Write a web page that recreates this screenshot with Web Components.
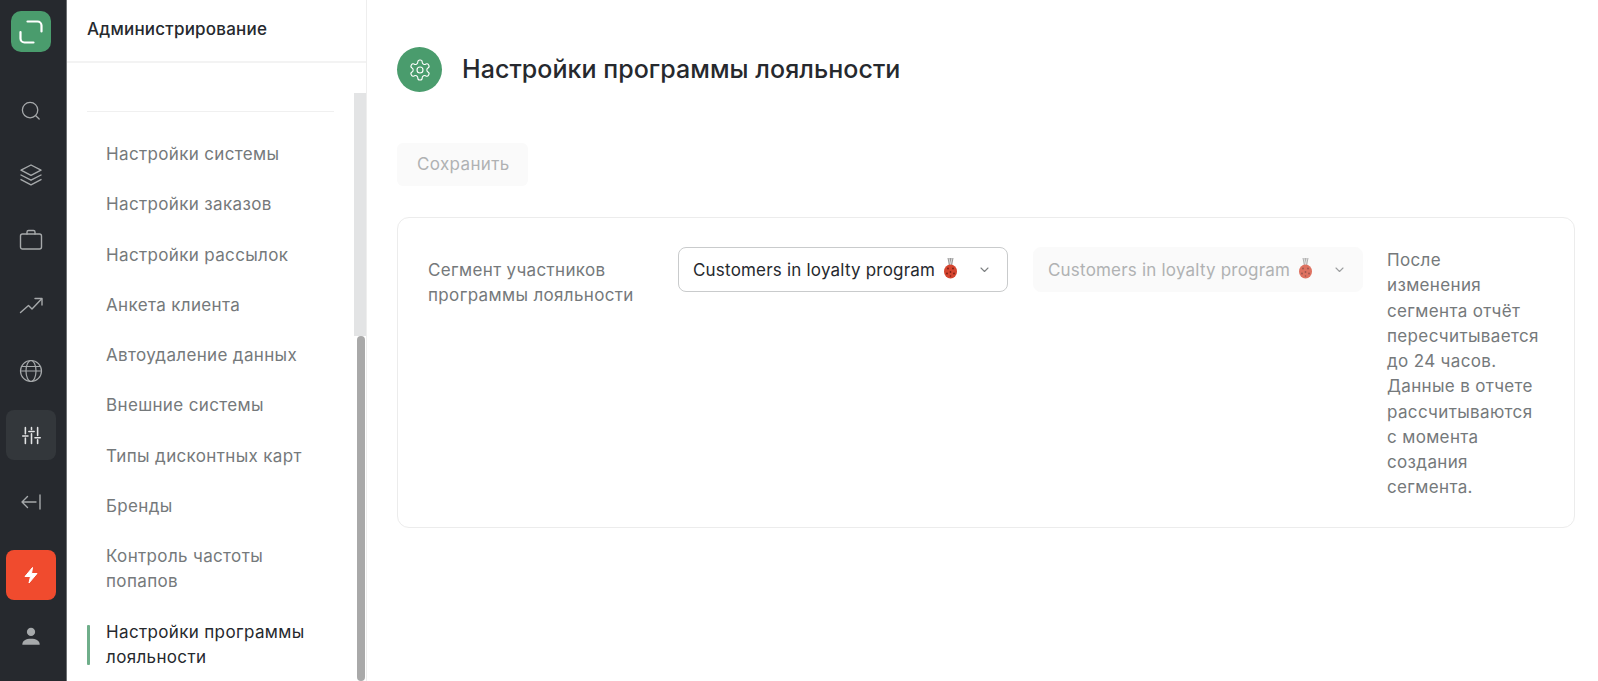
<!DOCTYPE html>
<html lang="ru"><head><meta charset="utf-8"><title>Настройки программы лояльности</title>
<style>
html,body{margin:0;height:100%;overflow:hidden;background:#fff}
body{font-family:Inter,"Liberation Sans",sans-serif;color:#26292e}
</style></head><body>
<loyalty-app>
  <app-rail slot="rail"></app-rail>
  <admin-sidebar slot="side">
    <nav-item>Настройки системы</nav-item>
    <nav-item>Настройки заказов</nav-item>
    <nav-item>Настройки рассылок</nav-item>
    <nav-item>Анкета клиента</nav-item>
    <nav-item>Автоудаление данных</nav-item>
    <nav-item>Внешние системы</nav-item>
    <nav-item>Типы дисконтных карт</nav-item>
    <nav-item>Бренды</nav-item>
    <nav-item>Контроль частоты попапов</nav-item>
    <nav-item active>Настройки программы лояльности</nav-item>
  </admin-sidebar>
  <loyalty-page slot="main"></loyalty-page>
</loyalty-app>
<script>
const def=(name,html,init)=>customElements.define(name,class extends HTMLElement{
  constructor(){super();this.attachShadow({mode:'open'}).innerHTML=html;}
  connectedCallback(){init&&init(this)}
});
const S='fill="none" stroke="#a6a9ab" stroke-width="1.4" stroke-linecap="round" stroke-linejoin="round"';
const ic=(inner,attr=S,sz=24,vb=24)=>`<svg width="${sz}" height="${sz}" viewBox="0 0 ${vb} ${vb}" ${attr}>${inner}</svg>`;

def('loyalty-app',`<style>:host{display:flex;height:681px;width:1598px;overflow:hidden}</style>
<slot name="rail"></slot><slot name="side"></slot><slot name="main"></slot>`);

def('rail-item',`<style>
:host{display:flex;width:50px;height:50px;align-items:center;justify-content:center;border-radius:8px;flex:none}
:host([active]){background:#33373b}
:host([hot]){background:#f04b2e}
::slotted(svg){display:block}
</style><slot></slot>`);

def('app-rail',`<style>
:host{display:flex;flex-direction:column;align-items:center;width:62px;padding-right:4px;flex:none;height:670px;background:#26292e;padding-top:11px;border-right:1px solid #6d7073}
.logo{width:40px;height:41px;border-radius:10px;background:#4a9c6d;display:flex;align-items:center;justify-content:center;margin-bottom:33px}
.list{display:flex;flex-direction:column;gap:15px}
.end{display:flex;flex-direction:column;gap:11px;margin-top:25px}
.d1,.d2{display:block;line-height:0}
.d1{transform:translateY(1px)}.d2{transform:translateY(2px)}
</style>
<div class="logo"><svg width="26" height="26" viewBox="0 0 26 26" fill="none" stroke="#fff" stroke-width="2.2" stroke-linecap="round"><path d="M9.500 2.500h10a4 4 0 0 1 4 4v6"/><path d="M2.500 13v6.500a4 4 0 0 0 4 4h9"/></svg></div>
<div class="list">
<rail-item><span class="d1">${ic('<circle cx="11" cy="11" r="8.400"/><path d="M17.500 17.500l3.400 3.200"/>',S,22)}</span></rail-item>
<rail-item>${ic('<path d="M12 2l10 5.200-10 5.200L2 7.200z"/><path d="M2 12l10 5.200L22 12"/><path d="M2 16.600l10 5.200 10-5.200"/>')}</rail-item>
<rail-item>${ic('<rect x="1.500" y="6" width="21" height="15" rx="2"/><path d="M8 6V4a1.500 1.500 0 0 1 1.500-1.500h5A1.500 1.500 0 0 1 16 4v2"/>')}</rail-item>
<rail-item>${ic('<path d="M1.500 19.500l8-7 3.500 3.500L22.500 6"/><path d="M16 5.500h7v6.500"/>')}</rail-item>
<rail-item><span class="d1">${ic('<circle cx="12" cy="12" r="10.500"/><ellipse cx="12" cy="12" rx="5" ry="10.500"/><path d="M1.500 12h21M3 7.500h18"/>','fill="none" stroke="#a6a9ab" stroke-width="1.200"')}</span></rail-item>
<rail-item active>${ic('<path d="M5 3v7M5 15v6M12 3v2M12 10v11M19 3v9M19 17v4M2 12.500h6M9 7.500h6M16 14.500h6"/>','fill="none" stroke="#e3e4e5" stroke-width="1.800" stroke-linecap="round"',21)}</rail-item>
<rail-item><span class="d2">${ic('<path d="M17 12H3M8.500 6.500L3 12l5.500 5.500M21 5v14"/>')}</span></rail-item>
</div>
<div class="end">
<rail-item hot>${ic('<path d="M13.500 4.500L6 13.500h5.500l-1.500 6.500 8-9.500h-5.500z"/>','fill="#fff" stroke="#fff" stroke-width="1" stroke-linejoin="round"')}</rail-item>
<rail-item>${ic('<circle cx="12" cy="7.500" r="4.500"/><path d="M2.500 21.500c0-4.500 4-6.500 9.500-6.500s9.500 2 9.500 6.500z"/>','fill="#a6a9ab"',22)}</rail-item>
</div>`);

def('admin-sidebar',`<style>
:host{display:block;position:relative;width:299px;flex:none;height:681px;border-right:1px solid #eeeeee;overflow:hidden;background:#fff}
header{height:63px;box-sizing:border-box;border-bottom:2px solid #f3f3f3;padding:0 20px 3px;display:flex;align-items:center;font-size:17px;font-weight:500;color:#26292e;letter-spacing:.22px}
.divider{height:1px;background:#f0f0f0;margin:48px 32px 0 20px}
nav{display:flex;flex-direction:column;padding:17.600px 40px 0 20px}
.track{position:absolute;right:0;top:93px;bottom:0;width:12px;background:#e3e4e5}
.thumb{position:absolute;right:1px;top:336px;bottom:0;width:8px;border-radius:4px;background:#a9a9a9}
.cover{position:absolute;right:0;top:336px;bottom:0;width:12px;background:#fff}
</style>
<header>Администрирование</header>
<div class="divider"></div>
<nav><slot></slot></nav>
<div class="track"></div><div class="cover"></div><div class="thumb"></div>`);

def('nav-item',`<style>
:host{display:block;position:relative;padding:12.500px 0 12.500px 19px;font-size:17px;line-height:25.250px;color:#75797b;letter-spacing:.35px}
:host([active]){color:#26292e}
:host([active])::before{content:"";position:absolute;left:0;top:17.500px;bottom:17.500px;width:2.500px;background:#6fae8a;border-radius:1px}
</style><slot></slot>`);

const medal=`<svg class="m" width="15" height="22" viewBox="0 0 15 22"><path d="M4.500 1h6L9 9H6z" fill="#9a9a9a"/><path d="M6 1l1.500 7L9 1" fill="none" stroke="#e8e8e8" stroke-width=".8"/><ellipse cx="7.500" cy="14.500" rx="6.500" ry="7" fill="#d5452f"/><circle cx="5" cy="11.500" r=".9" fill="#7b2015"/><circle cx="10" cy="11.500" r=".9" fill="#7b2015"/><circle cx="7.500" cy="15" r=".9" fill="#7b2015"/><circle cx="4" cy="16.500" r=".9" fill="#7b2015"/><circle cx="11" cy="16.500" r=".9" fill="#7b2015"/><circle cx="7.500" cy="19" r=".8" fill="#7b2015"/></svg>`;

def('seg-select',`<style>
:host{display:flex;align-items:center;box-sizing:border-box;height:45px;margin-top:-1px;border:1px solid #c9cbcc;border-radius:8px;padding:0 14px;font-size:17px;color:#26292e;background:#fff}
:host([disabled]){background:#fafafa;border-color:#fafafa;color:#b0b2b3}
:host([disabled]) svg{opacity:.75}
.t{white-space:nowrap;letter-spacing:.2px}
.m{margin-left:8px;flex:none;margin-top:-4px}
.c{margin-left:auto;margin-right:4px;flex:none}
</style><span class="t"><slot></slot></span>${medal}
<svg class="c" width="9" height="6" viewBox="0 0 9 6" fill="none" stroke="#7d8082" stroke-width="1.100" stroke-linecap="round" stroke-linejoin="round"><path d="M1 1l3.500 3.500L8 1"/></svg>`);

def('loyalty-page',`<style>
:host{display:block;flex:1;box-sizing:border-box;padding:47px 23px 0 30px;min-width:0}
.head{display:flex;align-items:center;gap:20px;height:45px}
.badge{width:45px;height:45px;border-radius:50%;background:#4a9c6d;display:flex;align-items:center;justify-content:center;flex:none}
h1{margin:0;font-size:25px;font-weight:500;color:#26292e;line-height:1;letter-spacing:.05px}
.save{display:inline-flex;align-items:center;box-sizing:border-box;height:43px;width:131px;padding:0 20px 2px;margin-top:51px;background:#fafafa;color:#b0b2b3;border-radius:6px;font-size:17px;letter-spacing:.35px}
.card{margin-top:31px;box-sizing:border-box;height:311px;border:1px solid #ececec;border-radius:12px;padding:30px;display:grid;grid-template-columns:226px 330px 331px 1fr;gap:24px;align-items:start}
.card seg-select[disabled]{margin-left:1px}
.lab{font-size:17px;line-height:25.250px;color:#75797b;padding-top:9.500px;letter-spacing:.35px}
.note{font-size:17px;line-height:25.250px;color:#75797b;margin:0 3px 0 0;letter-spacing:.35px}
</style>
<div class="head"><div class="badge">${ic('<path d="M12.220 2h-.44a2 2 0 0 0-2 2v.18a2 2 0 0 1-1 1.730l-.43.25a2 2 0 0 1-2 0l-.15-.08a2 2 0 0 0-2.730.73l-.22.38a2 2 0 0 0 .73 2.730l.15.1a2 2 0 0 1 1 1.720v.51a2 2 0 0 1-1 1.740l-.15.09a2 2 0 0 0-.73 2.730l.22.38a2 2 0 0 0 2.730.73l.15-.08a2 2 0 0 1 2 0l.43.25a2 2 0 0 1 1 1.730V20a2 2 0 0 0 2 2h.44a2 2 0 0 0 2-2v-.18a2 2 0 0 1 1-1.730l.43-.25a2 2 0 0 1 2 0l.15.08a2 2 0 0 0 2.730-.73l.22-.39a2 2 0 0 0-.73-2.730l-.15-.08a2 2 0 0 1-1-1.740v-.5a2 2 0 0 1 1-1.740l.15-.09a2 2 0 0 0 .73-2.730l-.22-.38a2 2 0 0 0-2.730-.73l-.15.08a2 2 0 0 1-2 0l-.43-.25a2 2 0 0 1-1-1.730V4a2 2 0 0 0-2-2z"/><circle cx="12" cy="12" r="3"/>','fill="none" stroke="#fff" stroke-width="1.100"')}</div><h1>Настройки программы лояльности</h1></div>
<div class="save">Сохранить</div>
<div class="card">
<div class="lab">Сегмент участников программы лояльности</div>
<seg-select>Customers in loyalty program</seg-select>
<seg-select disabled>Customers in loyalty program</seg-select>
<div class="note">После<br>изменения сегмента отчёт пересчитывается до 24 часов. Данные в отчете рассчитываются с момента создания сегмента.</div>
</div>`);
</script>
</body></html>
